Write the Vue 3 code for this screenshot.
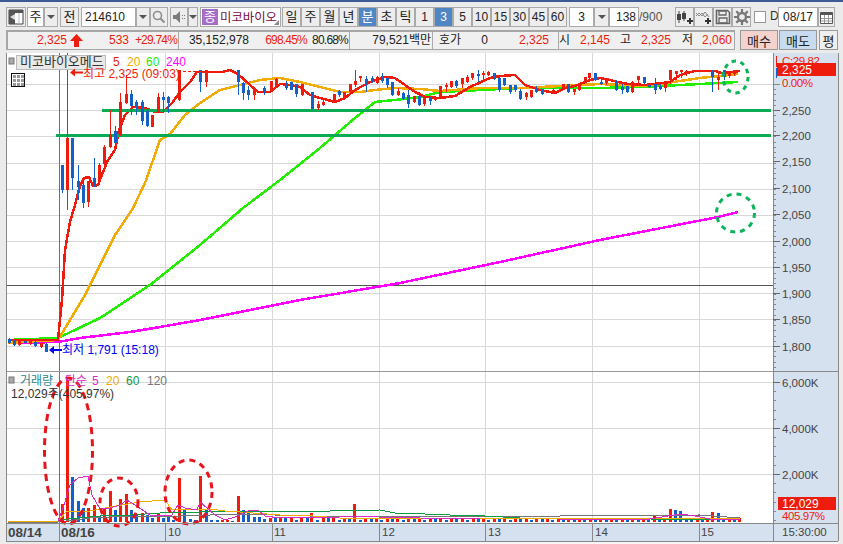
<script setup>
const periods1 = ['일', '주', '월', '년', '분', '초', '틱']
const periods2 = ['1', '3', '5', '10', '15', '30', '45', '60']

// right edge of each item in the quote row, widths come from the gap to the previous one
const quoteRaw = [
  { t: '2,325', end: 65, c: 'red' }, { arrow: true, end: 81 },
  { t: '533', end: 127, c: 'red' }, { t: '+29.74%', end: 175, c: 'red pct' }, { sep: true, end: 177 },
  { t: '35,152,978', end: 247 }, { t: '698.45%', end: 305, c: 'red pct' }, { t: '80.68%', end: 346, c: 'pct' }, { sep: true, end: 348 },
  { t: '79,521백만', end: 429 }, { sep: true, end: 431 },
  { t: '호가', end: 459 }, { t: '0', end: 486 }, { t: '2,325', end: 547, c: 'red' }, { sep: true, end: 557 },
  { t: '시', end: 568 }, { t: '2,145', end: 608, c: 'red' }, { t: '고', end: 629 }, { t: '2,325', end: 669, c: 'red' },
  { t: '저', end: 691 }, { t: '2,060', end: 730, c: 'red' }
]
let prev = 8
const quote = quoteRaw.map((q) => {
  const w = q.end - prev
  prev = q.end
  return { ...q, w }
})

const pts = (a) => a.map((p) => p.join(',')).join(' ')

const ma5 = pts([[8,340],[58,340],[62,300],[65,250],[70,222],[75,205],[80,186],[84,178],[89,177],[93,186],[98,185],[103,172],[108,160],[115,150],[119,130],[125,115],[133,107],[145,108],[155,112],[163,112],[172,103],[180,92],[190,82],[197,72],[222,72],[230,70],[238,74],[250,85],[258,92],[270,92],[280,84],[290,85],[300,87],[310,95],[320,98],[335,102],[345,98],[355,90],[370,82],[385,77],[395,78],[405,85],[415,92],[425,97],[440,98],[455,96],[470,87],[490,78],[500,76],[515,75],[525,85],[540,90],[555,93],[565,88],[575,86],[590,80],[600,78],[610,80],[618,82],[628,84],[645,85],[670,82],[680,75],[695,71],[715,71],[722,73],[740,71]])
const ma20 = pts([[8,343],[58,340],[70,320],[85,295],[100,265],[115,235],[132,210],[145,183],[160,140],[170,134],[185,115],[200,103],[220,90],[240,85],[260,80],[280,78],[300,82],[320,87],[340,92],[360,92],[375,90],[395,88],[420,89],[440,91],[480,88],[520,88],[560,86],[600,84],[620,85],[640,86],[660,84],[680,81],[700,78],[720,76],[738,74]])
const ma60 = pts([[8,340],[58,338],[100,318],[150,285],[200,245],[243,208],[280,180],[320,148],[355,118],[375,102],[395,100],[420,97],[440,92],[480,90],[520,88],[560,88],[600,88],[640,87],[680,85],[700,84],[738,82]])
const ma240 = pts([[8,343],[58,342],[80,338],[130,332],[160,327],[200,320],[300,300],[400,283],[500,262],[600,240],[718,217],[738,212]])

const volMagenta = pts([[58,521],[64,505],[70,485],[78,478],[88,476],[92,495],[100,509],[110,508],[120,505],[127,500],[135,505],[150,515],[165,516],[172,515],[178,505],[185,508],[197,510],[200,502],[207,508],[215,515],[225,520],[235,517],[250,510],[258,510],[265,516],[280,518],[340,517],[360,516],[378,517],[420,518],[480,519],[560,519],[650,519],[668,516],[680,514],[695,516],[710,519],[740,519]])
const volOrange = pts([[8,521],[58,521],[66,512],[90,511],[110,507],[140,502],[165,500],[172,510],[180,509],[200,509],[210,509],[225,511],[240,512],[280,515],[290,516],[300,515],[340,518],[380,518],[740,519]])
const volGreen = pts([[58,520],[100,516],[130,515],[160,513],[200,512],[230,511],[280,511],[330,511],[380,510],[395,513],[425,514],[445,514],[450,515],[485,516],[520,518],[560,518],[650,519],[740,520]])
const volGrey = pts([[8,522],[58,522],[90,518],[130,516],[180,516],[240,514],[310,516],[380,516],[485,516],[560,516],[700,515],[740,518]])

// x, body top, body bottom, wick top, wick bottom, colour
const candles = [
  [8,339,343,338,344,'b'],[13,341,345,340,346,'b'],[18,340,345,340,346,'r'],[24,341,343,340,344,'b'],[29,341,344,340,345,'r'],[34,342,346,341,347,'b'],[40,343,347,342,348,'r'],[45,344,352,343,352,'b'],
  [61,165,190,165,193,'b'],[66,138,190,53,210,'r'],[71,138,178,138,190,'b'],[77,181,187,165,200,'b'],[82,185,203,177,208,'b'],[87,181,202,181,207,'r'],[93,178,186,158,187,'b'],[98,165,182,163,183,'r'],[103,147,164,145,165,'r'],[109,135,147,110,148,'r'],[114,131,143,126,148,'b'],[119,102,135,93,136,'r'],[125,94,103,75,104,'r'],[130,94,106,90,115,'b'],[135,102,106,100,115,'b'],[141,102,121,100,125,'b'],[146,111,126,108,127,'b'],[151,115,127,115,127,'r'],[157,97,112,93,113,'r'],[162,97,100,92,112,'b'],[167,97,103,96,113,'b'],[178,70,100,70,101,'r'],
  [199,70,82,70,92,'b'],[205,70,82,70,87,'r'],[237,70,82,70,95,'b'],[242,83,93,82,100,'b'],[247,90,95,86,100,'b'],[253,88,95,88,100,'r'],[263,88,93,86,95,'b'],[270,81,90,81,91,'r'],[275,79,86,78,88,'r'],
  [285,84,88,81,90,'b'],[290,82,90,82,90,'b'],[295,84,94,84,97,'b'],[301,84,95,84,96,'r'],[311,92,109,92,109,'b'],[317,104,108,101,110,'r'],[322,102,105,98,106,'r'],[333,94,100,94,103,'r'],[338,91,95,90,97,'b'],[343,92,97,92,98,'r'],[349,84,92,84,93,'r'],[354,81,85,70,87,'r'],[359,76,78,76,82,'r'],[365,79,83,76,92,'b'],[371,78,81,76,83,'b'],[376,77,83,76,84,'r'],[381,76,81,73,83,'b'],[386,78,85,78,88,'b'],[391,82,95,82,96,'b'],[397,91,95,88,96,'r'],[402,93,99,92,100,'b'],[407,95,104,90,108,'b'],[413,96,102,96,103,'r'],[418,96,105,92,106,'b'],[423,98,104,98,106,'r'],[429,99,101,97,105,'b'],[434,98,100,98,101,'r'],[439,86,97,86,98,'r'],[445,85,87,83,92,'r'],[450,81,87,81,88,'r'],[455,81,86,80,88,'b'],[461,78,84,78,88,'r'],[466,77,82,75,83,'r'],[471,73,78,73,80,'r'],[477,74,76,70,82,'b'],[482,73,75,71,80,'r'],[487,72,75,71,76,'r'],[493,73,79,73,80,'b'],[498,78,90,76,92,'b'],[503,78,85,78,86,'b'],[509,85,92,85,94,'b'],[514,85,90,85,92,'b'],[519,91,99,89,100,'b'],[525,93,97,92,100,'r'],[530,90,97,90,98,'r'],[535,88,92,86,93,'b'],[541,92,94,89,95,'b'],[552,90,93,88,94,'r'],
  [562,84,88,84,90,'r'],[567,84,92,84,93,'b'],[573,89,92,89,95,'r'],[578,84,90,84,91,'r'],[584,77,82,77,83,'r'],[588,73,78,75,79,'r'],[594,73,80,73,81,'b'],[600,82,84,79,85,'b'],[605,80,83,80,85,'r'],[615,82,90,80,91,'b'],[621,87,90,84,94,'b'],[626,86,92,86,93,'b'],[631,82,92,81,93,'r'],[637,76,80,76,84,'r'],[643,77,83,77,84,'b'],[648,85,87,83,88,'b'],[654,84,90,78,94,'b'],[659,86,89,84,90,'b'],[664,84,88,84,92,'r'],[669,70,80,70,84,'r'],[675,71,74,71,80,'r'],[680,70,72,70,78,'r'],[685,71,73,70,76,'r'],[711,70,77,70,92,'b'],[717,77,80,72,90,'r'],[723,70,77,70,80,'b'],[728,73,76,72,78,'r'],[733,72,74,71,76,'r']
]

// big volume bars are read off the picture, the tail is a repeating pattern
const volBars = [
  [61,504,'r'],[66,380,'r'],[71,477,'b'],[77,501,'b'],[82,508,'b'],[87,508,'r'],[93,505,'r'],[98,516,'b'],[103,509,'r'],[109,491,'r'],[114,510,'b'],[119,499,'r'],[125,494,'r'],[130,510,'b'],[135,514,'b'],[141,513,'r'],[146,515,'b'],[151,518,'b'],[157,513,'r'],[162,518,'b'],[167,517,'b'],[172,520,'b'],[178,478,'r'],[183,509,'b'],[189,519,'b'],[194,520,'b'],[199,476,'r'],[205,510,'b'],[210,520,'b'],[216,520,'b'],[221,520,'r'],[226,520,'r'],[231,521,'b'],[237,496,'r'],[242,510,'b'],[247,511,'b'],[253,517,'b'],[258,517,'b'],[263,519,'b'],[269,518,'r'],[274,518,'b'],
  [310,513,'r'],[353,504,'r'],[472,518,'r'],[653,516,'r'],[669,509,'r'],[674,510,'b'],[679,511,'b'],[685,518,'b'],[690,518,'b'],[711,512,'r'],[717,513,'b'],[722,518,'b']
]
const big = volBars.map((b) => b[0])
for (let i = 0; i < 87; i++) {
  const x = Math.round(279 + i * 5.34)
  if (x > 740 || big.some((v) => Math.abs(v - x) < 3)) continue
  volBars.push([x, i % 4 === 3 ? 520 : 518, i % 2 ? 'b' : 'r'])
}

const vGrid = [165, 272, 379, 485, 592, 699]
const hGrid = [84, 110, 136, 163, 189, 215, 241, 267, 293, 319, 346]
const hVol = [382, 428, 474]
const priceTicks = []
for (let y = 84; y < 371; y += 5.24) priceTicks.push(Math.round(y))
const volTicks = []
for (let y = 382; y < 523; y += 9.2) volTicks.push(Math.round(y))
const priceLabels = [
  ['2,250', 110], ['2,200', 135], ['2,150', 161], ['2,100', 188], ['2,050', 214],
  ['2,000', 241], ['1,950', 267], ['1,900', 293], ['1,850', 319], ['1,800', 346]
]
const volLabels = [['6,000K', 382], ['4,000K', 428], ['2,000K', 474]]
const dateLabels = [['10', 168], ['11', 274], ['12', 382], ['13', 488], ['14', 595], ['15', 701]]
const dateLines = [59, 165, 272, 379, 485, 592, 699]
const tailCells = [[12, 74], [16, 74], [20, 74], [12, 78], [16, 78], [20, 78], [12, 82], [16, 82], [20, 82]]
</script>

<template>
  <div class="screen">
    <div class="title-strip"></div>

    <div class="toolbar">
      <button class="btn icon w20">
        <svg width="16" height="16" viewBox="0 0 16 16"><path d="M1 1h14v14H1z" fill="#fff" stroke="#444"/><path d="M1 1h14v3H1zM1 4h6v11H1z" fill="#555"/><path d="M7 5v6L2 8z" fill="#ddd"/><path d="M11 4v11" stroke="#bbb"/></svg>
      </button>
      <div class="field w21 center">주</div>
      <button class="btn drop w14"><i class="tri"></i></button>
      <button class="btn w19 ml2">전</button>
      <div class="field w55 ml2 code">214610</div>
      <button class="btn drop w14"><i class="tri"></i></button>
      <button class="btn icon w18">
        <svg width="14" height="14" viewBox="0 0 14 14"><circle cx="5.5" cy="5.5" r="4" fill="none" stroke="#8f8f8f" stroke-width="1.6"/><path d="M8.5 8.5l4 4" stroke="#8f8f8f" stroke-width="2.2"/></svg>
      </button>
      <button class="btn icon w18 ml2">
        <svg width="14" height="14" viewBox="0 0 14 14"><path d="M1 5h3l4-4v12L4 9H1z" fill="#7a7a7a"/><path d="M10 5h1v1h-1zM12 5h1v1h-1zM10 8h1v1h-1zM12 8h1v1h-1z" fill="#7a7a7a"/></svg>
      </button>
      <button class="btn drop w10"><i class="tri"></i></button>
      <div class="name ml3">
        <span class="badge">종</span>
        <span class="name-text">미코바이오</span>
        <i class="corner"></i>
      </div>
      <button v-for="p in periods1" :key="p" class="btn w19 ml1" :class="{ on: p === '분' }">{{ p }}</button>
      <button v-for="p in periods2" :key="'n' + p" class="btn w18n num" :class="{ on: p === '3' }">{{ p }}</button>
      <div class="field w25 center ml2 num">3</div>
      <button class="btn drop w15"><i class="tri"></i></button>
      <div class="field w30 right num">138</div>
      <span class="total">/900</span>
      <button class="btn icon w19 ml7">
        <svg width="17" height="15" viewBox="0 0 17 15"><path d="M3 1v12M8 1v10" stroke="#444"/><path d="M1 4h4v6H1zM6 3h4v6H6z" fill="#444"/><path d="M11 11h6M14 8v6" stroke="#333" stroke-width="2"/></svg>
      </button>
      <button class="btn icon w19">
        <svg width="17" height="15" viewBox="0 0 17 15"><path d="M1 6l3-3 3 3 3-4 4 5M1 3l3 3 3-3 3 4 3-3" fill="none" stroke="#888"/><path d="M10 11h6M13 8v6" stroke="#333" stroke-width="2"/></svg>
      </button>
      <button class="btn icon w19">
        <svg width="16" height="16" viewBox="0 0 16 16"><path d="M1.5 1.5h11l2 2v11h-13z" fill="none" stroke="#666" stroke-width="1.6"/><path d="M4 2h7v4H4zM4 9h8v5H4z" fill="none" stroke="#666" stroke-width="1.3"/></svg>
      </button>
      <button class="btn icon w19">
        <svg width="16" height="16" viewBox="0 0 16 16"><circle cx="8" cy="8" r="4" fill="none" stroke="#777" stroke-width="2.4"/><path d="M8 0v3M8 13v3M0 8h3M13 8h3M2.3 2.3l2.1 2.1M11.6 11.6l2.1 2.1M13.7 2.3l-2.1 2.1M4.4 11.6l-2.1 2.1" stroke="#777" stroke-width="2.2"/></svg>
      </button>
      <i class="check"></i>
      <span class="d-label">D</span>
      <div class="field w39 center num date">08/17</div>
      <button class="btn icon w17">
        <svg width="13" height="13" viewBox="0 0 13 13"><path d="M.5 1.5h12v11H.5z" fill="#fff" stroke="#555"/><path d="M.5 1.5h12v2.5H.5z" fill="#555"/><path d="M4.5 4v8M8.5 4v8M1 7.5h11M1 10h11" stroke="#999"/></svg>
      </button>
    </div>

    <div class="quote-row">
      <div class="quote">
        <template v-for="(q, i) in quote" :key="i">
          <span v-if="q.sep" class="q-sep" :style="{ width: q.w + 'px' }"></span>
          <span v-else-if="q.arrow" class="q-arrow" :style="{ width: q.w + 'px' }">
            <svg width="13" height="13" viewBox="0 0 13 13"><path d="M6.5 0L13 7H9v6H4V7H0z" fill="#ee1c0c"/></svg>
          </span>
          <span v-else class="q-item" :class="q.c" :style="{ width: q.w + 'px' }">{{ q.t }}</span>
        </template>
      </div>
      <button class="trade buy">매수</button>
      <button class="trade sell">매도</button>
      <button class="trade even">평</button>
    </div>

    <svg class="chart" width="843" height="491" viewBox="0 53 843 491">
      <rect x="400" y="542" width="438" height="2" fill="#f6f6f6"/>
      <rect x="6" y="53" width="767" height="470" fill="#fff"/>
      <rect x="773" y="53" width="65" height="488" fill="#d6e1ef"/>
      <rect x="6" y="523" width="767" height="18" fill="#d6e1ef"/>

      <g class="grid">
        <line v-for="x in vGrid" :key="'v' + x" :x1="x" :x2="x" y1="53" y2="523"/>
        <line v-for="y in hGrid" :key="'h' + y" x1="6" x2="773" :y1="y" :y2="y"/>
        <line v-for="y in hVol" :key="'hv' + y" x1="6" x2="773" :y1="y" :y2="y"/>
      </g>
      <line class="crisp" x1="59" x2="59" y1="53" y2="523" stroke="#e8402c"/>
      <line class="crisp" x1="6" x2="773" y1="285" y2="285" stroke="#555"/>
      <line class="crisp" x1="6" x2="773" y1="371" y2="371" stroke="#999"/>

      <polyline class="crisp ln" :points="ma240" stroke="#ff00ff" stroke-width="2.5"/>
      <polyline class="crisp ln" :points="ma60" stroke="#22ee00" stroke-width="2.5"/>
      <polyline class="crisp ln" :points="ma20" stroke="#f2ab00" stroke-width="2.5"/>
      <polyline class="crisp ln" :points="ma5" stroke="#ee1c0c" stroke-width="2.5"/>

      <line class="crisp" x1="102" x2="771" y1="110" y2="110" stroke="#0bab55" stroke-width="3"/>
      <line class="crisp" x1="56" x2="771" y1="135" y2="135" stroke="#0bab55" stroke-width="3"/>

      <g v-for="(c, i) in candles" :key="'c' + i" class="crisp">
        <line :x1="c[0] + 1.5" :x2="c[0] + 1.5" :y1="c[3]" :y2="c[4]" :stroke="c[5] === 'r' ? '#ee1c0c' : '#1560c8'"/>
        <rect :x="c[0]" :y="c[1]" width="3" :height="c[2] - c[1]" :fill="c[5] === 'r' ? '#ee1c0c' : '#1560c8'"/>
      </g>
      <path class="crisp" d="M178 71H222" stroke="#ee1c0c" stroke-dasharray="3 2" fill="none"/>

      <rect v-for="(b, i) in volBars" :key="'b' + i" class="crisp" :x="b[0]" :y="b[1]" width="3" :height="522 - b[1]" :fill="b[2] === 'r' ? '#ee1c0c' : '#1560c8'"/>
      <polyline class="crisp thin" :points="volGrey" stroke="#777"/>
      <polyline class="crisp thin" :points="volGreen" stroke="#0e9a45"/>
      <polyline class="crisp thin" :points="volOrange" stroke="#f2ab00"/>
      <polyline class="crisp thin" :points="volMagenta" stroke="#d82bc8"/>

      <ellipse class="mark" cx="735.5" cy="77" rx="12.5" ry="16" stroke="#0cb35a" stroke-dasharray="4.5 4.5"/>
      <circle class="mark" cx="735.5" cy="213" r="19" stroke="#0cb35a" stroke-dasharray="5 5"/>
      <ellipse class="mark" cx="68.5" cy="451" rx="24" ry="73" stroke="#e8141c" stroke-dasharray="7 5"/>
      <ellipse class="mark" cx="119" cy="502" rx="19" ry="24" stroke="#e8141c" stroke-dasharray="6 5"/>
      <ellipse class="mark" cx="188.5" cy="492" rx="23.5" ry="32" stroke="#e8141c" stroke-dasharray="6 5"/>

      <!-- legends -->
      <rect x="9" y="58" width="5" height="6" fill="#aaa" stroke="#777"/>
      <rect x="16.5" y="55.5" width="89" height="14" fill="#e9e9e9" stroke="#bbb"/>
      <text class="t ko" x="20" y="66">미코바이오메드</text>
      <text class="t" x="113" y="66" fill="#ee1c0c">5</text>
      <text class="t" x="127" y="66" fill="#f2ab00">20</text>
      <text class="t" x="146" y="66" fill="#22ee00">60</text>
      <text class="t" x="166" y="66" fill="#ff00ff">240</text>

      <rect x="11.5" y="73.5" width="13" height="13" fill="#fff" stroke="#111"/>
      <rect v-for="(g, i) in tailCells" :key="'g' + i" :x="g[0] + 1" :y="g[1] + 1" width="3" height="3" fill="#999"/>

      <path d="M70 72.5l5-4v3h8v2h-8v3z" fill="#ee1c0c"/>
      <text class="t" x="83" y="78" fill="#ee1c0c">최고 2,325 (09:03)</text>

      <path d="M49 350l5-4v3h8v2h-8v3z" fill="#0000ee"/>
      <text class="t" x="62" y="354" fill="#0000ee">최저 1,791 (15:18)</text>

      <rect x="9" y="377" width="5" height="6" fill="#aaa" stroke="#777"/>
      <text class="t" x="20" y="385" fill="#2d8a8a">거래량</text>
      <text class="t" x="65" y="385" fill="#d82bc8">단순</text>
      <text class="t" x="92" y="385" fill="#d82bc8">5</text>
      <text class="t" x="106" y="385" fill="#f2ab00">20</text>
      <text class="t" x="126" y="385" fill="#0e9a45">60</text>
      <text class="t" x="147" y="385" fill="#777">120</text>
      <text class="t" x="11" y="398" fill="#333">12,029주(405.97%)</text>

      <!-- right axis -->
      <line class="crisp" x1="773" x2="773" y1="53" y2="541" stroke="#888"/>
      <line class="crisp" x1="773" x2="838" y1="371" y2="371" stroke="#888"/>
      <line v-for="y in priceTicks" :key="'pt' + y" class="crisp" x1="773" x2="776" :y1="y" :y2="y" stroke="#888"/>
      <line v-for="y in volTicks" :key="'vt' + y" class="crisp" x1="773" x2="776" :y1="y" :y2="y" stroke="#888"/>
      <g v-for="l in priceLabels" :key="l[0]">
        <line class="crisp" x1="773" x2="780" :y1="l[1]" :y2="l[1]" stroke="#666"/>
        <text class="t ax" x="782" :y="l[1] + 5">{{ l[0] }}</text>
      </g>
      <g v-for="l in volLabels" :key="l[0]">
        <line class="crisp" x1="773" x2="780" :y1="l[1]" :y2="l[1]" stroke="#666"/>
        <text class="t ax" x="782" :y="l[1] + 5">{{ l[0] }}</text>
      </g>
      <path class="crisp" d="M776 56v10h3" stroke="#ee1c0c" fill="none"/>
      <path class="crisp" d="M776 68v10M776 73h3" stroke="#1560c8" fill="none"/>
      <path class="crisp" d="M776 84h4" stroke="#888" fill="none"/>
      <text class="t ax-red" x="782" y="65">C:29.82</text>
      <rect x="777" y="63" width="59" height="13" fill="#ee1c0c"/>
      <text class="t" x="782" y="74" fill="#fff">2,325</text>
      <text class="t ax-red" x="782" y="87">0.00%</text>

      <rect x="778" y="497" width="58" height="13" fill="#ee1c0c"/>
      <text class="t" x="782" y="508" fill="#fff">12,029</text>
      <text class="t ax-red" x="782" y="520">405.97%</text>
      <text class="t ax" x="782" y="536">15:30:00</text>

      <!-- bottom axis -->
      <line class="crisp" x1="6" x2="838" y1="523" y2="523" stroke="#888"/>
      <line class="crisp" x1="6" x2="838" y1="541" y2="541" stroke="#888"/>
      <line class="crisp" x1="6" x2="6" y1="53" y2="541" stroke="#888"/>
      <line class="crisp" x1="838" x2="838" y1="53" y2="541" stroke="#888"/>
      <line v-for="x in dateLines" :key="'d' + x" class="crisp" :x1="x" :x2="x" y1="523" y2="541" stroke="#888"/>
      <text class="t bold" x="8" y="537">08/14</text>
      <text class="t bold" x="61" y="537">08/16</text>
      <text v-for="d in dateLabels" :key="d[0]" class="t ax" :x="d[1]" y="536">{{ d[0] }}</text>
    </svg>
  </div>
</template>

<style scoped>
.screen {
  width: 843px;
  height: 544px;
  background: #ebebeb;
  overflow: hidden;
  font-family: "Liberation Sans", "Noto Sans CJK KR", sans-serif;
  font-size: 12px;
  color: #222;
}
.title-strip { height: 2px; background: #3d5a95; }

.toolbar {
  display: flex;
  height: 20px;
  margin: 5px 5px 0 6px;
}
.btn {
  box-sizing: border-box;
  height: 20px;
  padding: 0;
  border: 1px solid #aaa;
  background: #ededed;
  color: #222;
  font-family: inherit;
  font-size: 13px;
  line-height: 18px;
  display: flex;
  align-items: center;
  justify-content: center;
  flex: none;
}
.btn.on { background: #4f86c6; color: #fff; }
.num { font-size: 12px; }
.field {
  box-sizing: border-box;
  height: 20px;
  flex: none;
  background: #fff;
  border: 1px solid #aaa;
  line-height: 18px;
  font-size: 13px;
}
.field.num { font-size: 12px; }
.center { text-align: center; }
.right { text-align: right; padding-right: 2px; }
.code { padding-left: 3px; font-size: 12px; }
.date { font-size: 12px; }
.tri {
  width: 0;
  height: 0;
  border-left: 4px solid transparent;
  border-right: 4px solid transparent;
  border-top: 4px solid #555;
}
.w10 { width: 10px; }
.w14 { width: 14px; }
.w15 { width: 15px; }
.w17 { width: 17px; }
.w18 { width: 18px; }
.w18n { width: 19px; }
.w19 { width: 19px; }
.w20 { width: 20px; }
.w21 { width: 17px; margin-left: 1px; }
.w25 { width: 25px; }
.w30 { width: 30px; }
.w39 { width: 40px; }
.w55 { width: 55px; }
.ml1 { margin-left: 0; }
.ml2 { margin-left: 2px; }
.ml3 { margin-left: 2px; }
.ml7 { margin-left: 7px; }
.name {
  position: relative;
  box-sizing: border-box;
  display: flex;
  align-items: center;
  width: 81px;
  height: 20px;
  flex: none;
  margin-right: 1px;
  background: #fff;
  border: 1px solid #aaa;
}
.badge {
  width: 16px;
  height: 16px;
  margin-left: 1px;
  background: #a56cc8;
  color: #fff;
  font-size: 13px;
  line-height: 15px;
  text-align: center;
}
.name-text { margin-left: 2px; color: #7a0c3c; font-size: 12.4px; white-space: nowrap; }
.corner {
  position: absolute;
  right: 1px;
  bottom: 1px;
  border-left: 5px solid transparent;
  border-bottom: 5px solid #888;
}
.total { width: 29px; flex: none; line-height: 20px; color: #555; font-size: 12px; }
.check {
  box-sizing: border-box;
  width: 12px;
  height: 12px;
  flex: none;
  margin: 4px 4px 0 3px;
  background: #fff;
  border: 1px solid #999;
}
.d-label { width: 8px; flex: none; line-height: 18px; color: #333; }

.quote-row {
  display: flex;
  height: 20px;
  margin: 3px 5px 0 6px;
}
.quote {
  box-sizing: border-box;
  display: flex;
  width: 729px;
  flex: none;
  padding-left: 2px;
  background: #f0f0f0;
  border: 1px solid #a6a6a6;
  border-width: 2px 1px 1px 2px;
  line-height: 17px;
}
.q-item { flex: none; text-align: right; white-space: nowrap; }
.q-item.red { color: #ee1c0c; }
.q-item.pct { letter-spacing: -0.8px; }
.q-sep { flex: none; border-right: 1px solid #aaa; box-sizing: border-box; }
.q-arrow { flex: none; display: flex; align-items: center; justify-content: flex-end; }
.trade {
  box-sizing: border-box;
  height: 20px;
  padding: 0;
  flex: none;
  border: 1px solid #999;
  font-family: inherit;
  font-size: 13px;
  color: #222;
}
.buy { width: 38px; margin-left: 5px; background: #f4d3ce; }
.sell { width: 38px; margin-left: 1px; background: #c8dcf1; }
.even { width: 19px; margin-left: 2px; background: #efefef; }

.chart { display: block; margin-top: 3px; }
.grid line { stroke: #d8d8d8; shape-rendering: crispEdges; }
.crisp { shape-rendering: crispEdges; }
.ln { fill: none; }
.thin { fill: none; stroke-width: 1; }
.mark { fill: none; stroke-width: 3; }
.t { font-family: "Liberation Sans", "Noto Sans CJK KR", sans-serif; font-size: 12px; }
.ko { font-size: 13px; fill: #333; }
.ax { font-size: 11.5px; fill: #444; }
.ax-red { font-size: 11.5px; fill: #ee1c0c; letter-spacing: -0.4px; }
.bold { font-size: 13.5px; font-weight: 700; fill: #444; }
</style>

<style>
body { background: #ebebeb; }
</style>
